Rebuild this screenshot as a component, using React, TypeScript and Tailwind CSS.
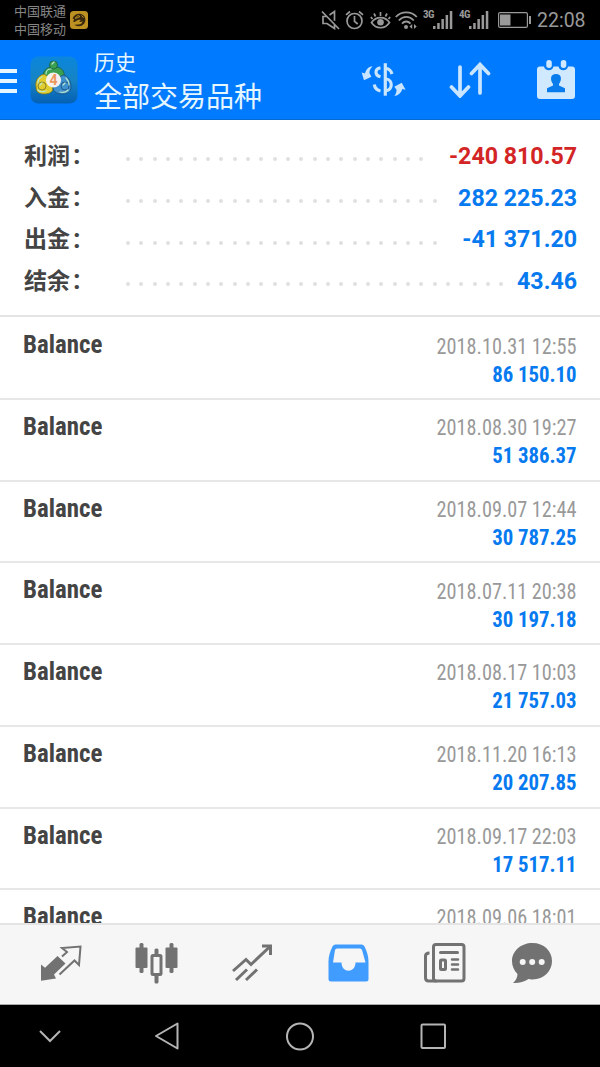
import React from "react";
import { clsx } from "clsx";

interface SummaryItem {
  label: string;
  value: string;
  dots: number;
  negative?: boolean;
}

const summary: SummaryItem[] = [
  { label: "利润", value: "-240 810.57", dots: 23, negative: true },
  { label: "入金", value: "282 225.23", dots: 24 },
  { label: "出金", value: "-41 371.20", dots: 24 },
  { label: "结余", value: "43.46", dots: 29 },
];

const history = [
  { time: "2018.10.31 12:55", amount: "86 150.10" },
  { time: "2018.08.30 19:27", amount: "51 386.37" },
  { time: "2018.09.07 12:44", amount: "30 787.25" },
  { time: "2018.07.11 20:38", amount: "30 197.18" },
  { time: "2018.08.17 10:03", amount: "21 757.03" },
  { time: "2018.11.20 16:13", amount: "20 207.85" },
  { time: "2018.09.17 22:03", amount: "17 517.11" },
  { time: "2018.09.06 18:01", amount: "" },
];

function SignalBars({ label }: { label: string }) {
  return (
    <div className="flex h-[18px] items-end">
      <span className="w-[10px] self-start font-['Roboto_Condensed',Roboto,sans-serif] text-[11px] leading-[8px] font-bold tracking-[-0.5px]">
        {label}
      </span>
      <svg className="h-[18px] w-[20px]" viewBox="0 0 20 18" fill="currentColor">
        <rect x="0" y="15" width="2.5" height="3" />
        <rect x="4.2" y="12" width="2.5" height="6" />
        <rect x="8.4" y="8" width="2.5" height="10" />
        <rect x="12.6" y="4" width="2.5" height="14" />
        <rect x="16.8" y="0" width="2.5" height="18" />
      </svg>
    </div>
  );
}

function StatusBar() {
  return (
    <div className="flex h-10 items-center bg-black pl-[14px] text-[#999]">
      <div className="pt-[2px] text-[13px] leading-[18px] text-[#858585]">
        <div>中国联通</div>
        <div>中国移动</div>
      </div>
      <svg className="ml-[4px] h-[18px] w-[18px]" viewBox="0 0 18 18">
        <rect width="18" height="18" rx="3.5" fill="#bd9022" />
        <path d="M2.6 7.500C4 3 9.500 1.500 13 4c4 3 2.700 9-1.500 10.700-3 1-6 .3-7-1l3.500-.2c3 .1 4.500-1.500 4.500-3.500-1 1-2 1.300-3.200.8l1.500-1.700C7.500 8.200 7 10 4.500 11L3 10.500l1.300-2z" fill="#37270d" />
        <path d="M5 7.300l3-2.800 2 1-2.400 1.200zM11.500 4.500l2 2.200" stroke="#bd9022" strokeWidth="1" fill="none" />
      </svg>

      <svg className="ml-[233px] h-[20px] w-[20px]" viewBox="0 0 20 20" fill="none" stroke="currentColor" strokeWidth="1.700">
        <path d="M1 1.500l17 17.500M5.500 6.500H2v7h4l7.500 5v-4.500M8.500 5l5-3.500v9.200" />
      </svg>
      <svg className="ml-[4px] h-[20px] w-[20px]" viewBox="0 0 20 20" fill="none" stroke="currentColor" strokeWidth="1.700">
        <circle cx="9.500" cy="11" r="7.500" />
        <path d="M9.500 6v5.300l3.200 2.700M1 4.800L5 1.500M14 1.500l4 3.300" />
      </svg>
      <svg className="ml-[5px] h-[20px] w-[21px]" viewBox="0 0 21 20" fill="none" stroke="currentColor" strokeWidth="1.700">
        <path d="M1.500 12.500c4.500-6.500 13.500-6.500 18 0-4.500 7-13.500 7-18 0zM10.500 6V2M5.500 6.500L4 3.500M15.500 6.500L17 3.500M2.500 9L.8 7M18.500 9l1.700-2" />
        <circle cx="10.500" cy="12.300" r="3.300" fill="currentColor" stroke="none" />
      </svg>
      <svg className="ml-[4px] h-[20px] w-[23px]" viewBox="0 0 23 20" fill="none" stroke="currentColor" strokeWidth="1.800">
        <path d="M.8 7c5.500-6.300 15.500-6.300 21 0M3.800 10.500c4.500-4.800 10.500-4.800 15 0M7 13.600c2.500-2.800 6-2.800 8.500 0" />
        <circle cx="11" cy="17" r="2" fill="currentColor" stroke="none" />
        <path d="M17.200 14v5l-2.700-2.500zM19 14v5l2.700-2.500z" fill="currentColor" stroke="none" />
      </svg>
      <div className="ml-[5px]">
        <SignalBars label="3G" />
      </div>
      <div className="ml-[6px]">
        <SignalBars label="4G" />
      </div>
      <svg className="ml-[9px] h-[16px] w-[34px]" viewBox="0 0 34 16">
        <rect x=".6" y=".6" width="28.800" height="14.800" rx="1.500" fill="none" stroke="currentColor" strokeWidth="1.200" />
        <rect x="2" y="2.500" width="10.500" height="11" fill="currentColor" />
        <rect x="31" y="4" width="2" height="8" fill="currentColor" />
      </svg>
      <span className="ml-[5px] pt-[2px] text-[19.500px] leading-5">22:08</span>
    </div>
  );
}

function AppLogo() {
  return (
    <svg className="h-12 w-12" viewBox="0 0 48 48">
      <defs>
        <linearGradient id="logo-bg" x1="0" y1="0" x2="0" y2="1">
          <stop offset="0" stopColor="#0b86dc" />
          <stop offset=".5" stopColor="#1684c4" />
          <stop offset="1" stopColor="#0560b4" />
        </linearGradient>
      </defs>
      <rect x=".5" y=".5" width="47" height="47" rx="8" fill="url(#logo-bg)" />
      <g strokeWidth=".8">
        <g fill="#3ba052" stroke="#175d3b">
          <path d="M13.500 21c-1-6 3-9 7-10h6.500c5 1 8 5 7 10l-7 3-7-2z" />
          <circle cx="23.500" cy="9" r="4" />
        </g>
        <g fill="#e0ce30" stroke="#776e22">
          <path d="M14 18c-7 2-9 8-8 13 0 5 3 7 8 7 4 0 8-1 9-5l-3-11z" />
          <circle cx="12" cy="30" r="4" />
        </g>
        <g fill="#3f90cc" stroke="#174d7e">
          <path d="M33 19c6 1 8 7 8 12 0 5-4 7-8 7-5 0-8-1-10-5l3-10z" />
          <circle cx="35" cy="30" r="4" />
        </g>
      </g>
      <path d="M16 18c0-3 2-5 5-5M8 27c0-3 1-5 4-6M36 22c2 2 3 4 3 7M10 29l2-2M33 29l2-2M22 8l2-2M8 34c2 2 5 2 8 1M30 36c3 1 6 0 8-2" stroke="#b5e4ce" strokeWidth="1.200" fill="none" strokeLinecap="round" />
      <circle cx="23.500" cy="24" r="7.600" fill="#f5f1ee" />
      <text x="23.500" y="29" textAnchor="middle" fontSize="14" fontWeight="700" fill="#ed985f" fontFamily="Roboto">
        4
      </text>
    </svg>
  );
}

function Header() {
  return (
    <header className="flex h-20 items-center border-b border-[#066bd5] bg-[#007aff] text-[#e6f6ff]">
      <div className="flex w-[17px] flex-col gap-[6px] pt-[3px]">
        <div className="h-1 bg-current" />
        <div className="h-1 bg-current" />
        <div className="h-1 bg-current" />
      </div>
      <div className="ml-[13px]">
        <AppLogo />
      </div>
      <div className="ml-[16px] w-[268px] pt-[8px]">
        <div className="text-[21px] leading-[27px]">历史</div>
        <div className="text-[28px] leading-[41px]">全部交易品种</div>
      </div>
      <svg className="h-[36px] w-[44px] overflow-visible text-[#c9e5ff]" viewBox="0 0 44 36" fill="none" stroke="currentColor" strokeWidth="3.200">
        <path d="M23.300 1.200v32.500" />
        <path d="M18.500 5.700c-6 1.300-6 7.500 0 9M24 6.500c3.500.3 5 2 6 5.500M12.300 22.500c.5 3.500 2.700 5.700 6.200 6.500M24 17c7 .5 7 11 0 11.700" />
        <path d="M10.600 4.200C8.300 6.500 7.500 8.500 7.400 11l2 3.700L2 18.200-.3 10.600l3.300 1C4 7.200 6.500 4.600 10.600 4.200zM32.300 34c1.700-2 2.300-4 2.200-6.200l-2.200-3 7.400-4.100 3.900 7.100-3.300-.8c-.8 3.700-3.500 6.300-8 7z" fill="currentColor" stroke="none" />
      </svg>
      <svg className="ml-[43px] h-[36px] w-[42px] text-[#c9e5ff]" viewBox="0 0 42 36" fill="none" stroke="currentColor" strokeWidth="3.700" strokeLinecap="round">
        <path d="M11 5v28M2.500 25l8.500 9 8.500-9M31 31V3M22.500 11.500l8.500-9 8.500 9" />
      </svg>
      <svg className="ml-[46px] h-[40px] w-[39px]" viewBox="0 0 39 40">
        <path d="M3 6.500h4c1 5 8.500 5 9.500 0h5c1 5 8.500 5 9.500 0h4q3 0 3 3V36q0 3-3 3H3q-3 0-3-3V9.500q0-3 3-3z" fill="#d1e9ff" />
        <path d="M8 5.500c0 6 8 6 8 0zM22.500 5.500c0 6 8 6 8 0z" fill="#087cec" />
        <rect x="9.300" y="0" width="5.500" height="8" rx="2.700" fill="#d1e9ff" />
        <rect x="23.800" y="0" width="5.500" height="8" rx="2.700" fill="#d1e9ff" />
        <path d="M19 14c6 0 6 6 3 10v1.500l6 2.700v4H10v-4l6-2.700V24c-3-4-3-10 3-10z" fill="#087cec" />
      </svg>
    </header>
  );
}

function SummaryRow({ label, value, dots, negative }: SummaryItem) {
  return (
    <div className="flex h-[41.700px] items-center font-bold">
      <span className="w-[49px] pt-[4px] text-[23px] leading-[34px] text-[#444]">{label}</span>
      <span className="w-[53px] pt-px text-[27px] leading-[34px] text-[#444]">:</span>
      <div className="mt-[9px] flex gap-[9.330px]">
        {Array.from({ length: dots }, (_, i) => (
          <span key={i} className="h-1 w-1 rounded-full bg-[#e0e0e0]" />
        ))}
      </div>
      <span
        className={clsx(
          "-mr-px ml-auto pt-[2px] text-[23.200px] leading-[34px]",
          negative ? "text-[#d32525]" : "text-[#087af0]",
        )}
      >
        {value}
      </span>
    </div>
  );
}

function HistoryRow({ time, amount }: { time: string; amount: string }) {
  return (
    <div className="flex h-[81.700px] shrink-0 justify-between border-b-2 border-[#e7e7e7] pt-[11px] pr-[23px] pl-[23px] font-['Roboto_Condensed',Roboto,sans-serif]">
      <span className="origin-left scale-x-[0.94] text-[26.500px] leading-[30px] font-bold text-[#444]">Balance</span>
      <div className="text-right leading-[28.500px]">
        <div className="origin-right scale-x-[0.9] pt-[2.200px] text-[22.500px] text-[#999]">{time}</div>
        <div className="origin-right scale-x-[0.945] pt-[0.600px] text-[22px] font-bold text-[#087af0]">{amount}</div>
      </div>
    </div>
  );
}

function TabBar() {
  return (
    <nav className="flex h-[82px] gap-[52px] border-t-2 border-b border-t-[#e4e4e4] border-b-[#aaa] bg-[#f6f6f6] pt-[16px] pl-[39px] text-[#727272]">
      <svg className="h-[44px] w-[44px]" viewBox="0 0 44 44" fill="none" stroke="currentColor" strokeWidth="2">
        <path d="M2 23.500l4 3.300L18.500 15l8 7.500-11.500 11 2 4L2 39.700z" fill="currentColor" stroke="none" />
        <path d="M23 15.500l5-4.500-5-4 18.500-1.500-1.500 18.500-4.500-4.500L20.500 33.500" />
      </svg>
      <svg className="h-[44px] w-[44px]" viewBox="0 0 44 44" fill="currentColor">
        <rect x="4.500" y="2" width="4" height="30" rx="1.500" />
        <rect x=".5" y="6.500" width="12" height="20.500" rx="1" />
        <rect x="34.500" y="2" width="4" height="30" rx="1.500" />
        <rect x="30.500" y="6.500" width="12" height="20.500" rx="1" />
        <rect x="19.500" y="7.500" width="4" height="35" rx="1.500" />
        <rect x="17" y="14.500" width="9" height="19" rx="1" fill="#f6f6f6" stroke="currentColor" strokeWidth="3" />
      </svg>
      <svg className="h-[44px] w-[44px]" viewBox="0 0 44 44" fill="none" stroke="currentColor" strokeWidth="3">
        <path d="M2 30L15 18.500l5 5L39 5.500M5 39L16 28.500M15 39L26 28.500" />
        <path d="M31 5h8.500v9" />
      </svg>
      <svg className="h-[44px] w-[44px]" viewBox="0 0 44 44">
        <path d="M8.500 3.500h26q2 0 3 2c2.500 5 4 10 4 15V38q0 2.500-2.500 2.500h-35Q1.500 40.500 1.500 38V20.500c0-5 1.500-10 4-15q1-2 3-2z" fill="#409cff" />
        <path d="M10 7.500h23q1.500 0 2 1.500l3.500 12.500H28.500c0 11-14 11-14 0H6L8 9q.5-1.500 2-1.500z" fill="#f6f6f6" />
      </svg>
      <svg className="h-[44px] w-[44px]" viewBox="0 0 44 44" fill="none" stroke="currentColor" strokeWidth="3">
        <rect x="10.500" y="3.500" width="30.500" height="36.500" rx="2.500" />
        <path d="M6.500 12Q2.500 12 2.500 15v21.500Q2.500 40 5.500 40h8" />
        <path d="M17.500 11.500h17" strokeLinecap="round" />
        <path d="M29 18.500h6M29 23.500h6M29 28.500h6" strokeLinecap="round" strokeWidth="2.500" />
        <rect x="17.500" y="19" width="5" height="9.500" rx="1" />
      </svg>
      <svg className="-ml-[9px] h-[44px] w-[44px]" viewBox="0 0 44 44">
        <path d="M22.500 2C34 2 42 10 42 20s-8 18.500-19.500 18.500c-2 0-3-.2-4-.5C14 41 8 42.500 3 42c3-2.500 4.500-6 4.500-9C4 29.500 2 25 2 20 2 10 11 2 22.500 2z" fill="currentColor" />
        <circle cx="12.700" cy="21" r="3" fill="#f6f6f6" />
        <circle cx="22.200" cy="21" r="3" fill="#f6f6f6" />
        <circle cx="31.700" cy="21" r="3" fill="#f6f6f6" />
      </svg>
    </nav>
  );
}

function NavigationBar() {
  return (
    <div className="flex h-[62px] items-center gap-[93px] bg-black pl-[30px] text-[#b5b5b5]">
      <svg className="-mr-[16px] h-[40px] w-[40px]" viewBox="0 0 40 40" fill="none" stroke="currentColor" strokeWidth="2">
        <path d="M10 15l10 10 10-10" />
      </svg>
      <svg className="h-[40px] w-[40px]" viewBox="0 0 40 40" fill="none" stroke="currentColor" strokeWidth="2" strokeLinejoin="round">
        <path d="M30.500 7.500v25L9 20z" />
      </svg>
      <svg className="h-[40px] w-[40px]" viewBox="0 0 40 40" fill="none" stroke="currentColor" strokeWidth="2">
        <circle cx="20" cy="20.500" r="13" />
      </svg>
      <svg className="h-[40px] w-[40px]" viewBox="0 0 40 40" fill="none" stroke="currentColor" strokeWidth="2">
        <rect x="8.500" y="8.500" width="23.500" height="23.500" rx="1" />
      </svg>
    </div>
  );
}

export default function App() {
  return (
    <div className="flex h-[1067px] w-[600px] flex-col overflow-hidden bg-white font-[Roboto,'Noto_Sans_CJK_SC',sans-serif]">
      <StatusBar />
      <Header />
      <main className="flex h-[803px] flex-col overflow-hidden">
        <section className="mb-[1.400px] h-[197px] shrink-0 border-b-2 border-[#e4e4e4] px-6 pt-[14px]">
          {summary.map((item) => (
            <SummaryRow key={item.label} {...item} />
          ))}
        </section>
        {history.map((item) => (
          <HistoryRow key={item.time} {...item} />
        ))}
      </main>
      <TabBar />
      <NavigationBar />
    </div>
  );
}
